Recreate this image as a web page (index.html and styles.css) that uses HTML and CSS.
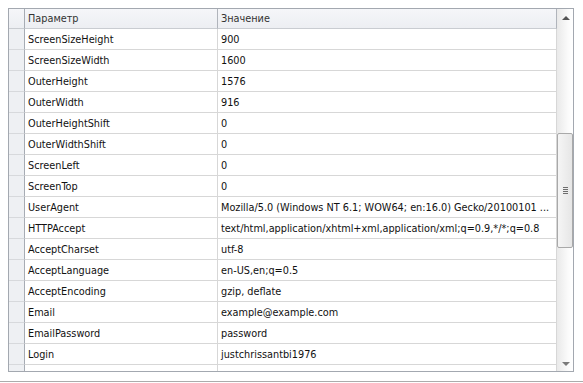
FILE: index.html
```html
<!DOCTYPE html>
<html>
<head>
<meta charset="utf-8">
<link rel="stylesheet" href="styles.css">
</head>
<body>
<div class="page">
  <div class="grid">
    <div class="table">
      <div class="row head">
        <div class="ind"></div>
        <div class="cell">Параметр</div>
        <div class="cell">Значение</div>
      </div>
      <div class="row"><div class="ind"></div><div class="cell">ScreenSizeHeight</div><div class="cell">900</div></div>
      <div class="row"><div class="ind"></div><div class="cell">ScreenSizeWidth</div><div class="cell">1600</div></div>
      <div class="row"><div class="ind"></div><div class="cell">OuterHeight</div><div class="cell">1576</div></div>
      <div class="row"><div class="ind"></div><div class="cell">OuterWidth</div><div class="cell">916</div></div>
      <div class="row"><div class="ind"></div><div class="cell">OuterHeightShift</div><div class="cell">0</div></div>
      <div class="row"><div class="ind"></div><div class="cell">OuterWidthShift</div><div class="cell">0</div></div>
      <div class="row"><div class="ind"></div><div class="cell">ScreenLeft</div><div class="cell">0</div></div>
      <div class="row"><div class="ind"></div><div class="cell">ScreenTop</div><div class="cell">0</div></div>
      <div class="row"><div class="ind"></div><div class="cell">UserAgent</div><div class="cell">Mozilla/5.0 (Windows NT 6.1; WOW64; en:16.0) Gecko/20100101 ...</div></div>
      <div class="row"><div class="ind"></div><div class="cell">HTTPAccept</div><div class="cell">text/html,application/xhtml+xml,application/xml;q=0.9,*/*;q=0.8</div></div>
      <div class="row"><div class="ind"></div><div class="cell">AcceptCharset</div><div class="cell">utf-8</div></div>
      <div class="row"><div class="ind"></div><div class="cell">AcceptLanguage</div><div class="cell">en-US,en;q=0.5</div></div>
      <div class="row"><div class="ind"></div><div class="cell">AcceptEncoding</div><div class="cell">gzip, deflate</div></div>
      <div class="row"><div class="ind"></div><div class="cell">Email</div><div class="cell">example@example.com</div></div>
      <div class="row"><div class="ind"></div><div class="cell">EmailPassword</div><div class="cell">password</div></div>
      <div class="row"><div class="ind"></div><div class="cell">Login</div><div class="cell">justchrissantbi1976</div></div>
      <div class="row"><div class="ind"></div><div class="cell">Password</div><div class="cell">qwerty</div></div>
    </div>
    <div class="scroll">
      <div class="btn"><span class="up"></span></div>
      <div class="track">
        <div class="thumb"><span class="grip"></span></div>
      </div>
      <div class="btn"><span class="down"></span></div>
    </div>
  </div>
</div>
</body>
</html>
```

FILE: styles.css
```css
html, body {
  margin: 0;
  padding: 0;
  background: #ffffff;
}
.page {
  width: 583px;
  height: 382px;
  border-bottom: 1px solid #acacac;
  padding: 8px 0 0 8px;
  box-sizing: border-box;
  overflow: hidden;
  font-family: "DejaVu Sans Condensed", "Liberation Sans", sans-serif;
  font-size: 10.8px;
  color: #111111;
}
.grid {
  width: 566px;
  height: 364px;
  box-sizing: border-box;
  border: 1px solid #a3a8b0;
  display: flex;
  overflow: hidden;
}
.table {
  width: 548px;
  display: flex;
  flex-direction: column;
  overflow: hidden;
}
.row {
  display: grid;
  grid-template-columns: 16px 193px 339px;
  height: 21px;
  flex: none;
}
.row.head {
  height: 20px;
  background: linear-gradient(#f5f6f9, #eceef2);
}
.ind {
  background: #eef0f3;
  border-right: 1px solid #a7acb4;
  border-bottom: 1px solid #d7d9dc;
}
.head .ind {
  background: transparent;
  border-bottom-color: #c9ccd1;
}
.cell {
  border-right: 1px solid #d7d7d7;
  border-bottom: 1px solid #d7d7d7;
  padding-left: 3px;
  padding-top: 1px;
  line-height: 19px;
  white-space: nowrap;
  overflow: hidden;
}
.head .cell {
  padding-top: 1px;
  line-height: 18px;
  color: #333333;
  border-right-color: #b0b4bb;
  border-bottom-color: #c9ccd1;
}
.scroll {
  width: 16px;
  display: flex;
  flex-direction: column;
  background: linear-gradient(to right, #e9e9e9, #fbfbfb 70%, #ffffff);
}
.btn {
  height: 17px;
  flex: none;
  display: flex;
  align-items: center;
  justify-content: center;
}
.up {
  width: 0;
  height: 0;
  border-left: 4px solid transparent;
  border-right: 4px solid transparent;
  border-bottom: 4px solid #555555;
  margin-left: 1px;
}
.down {
  width: 0;
  height: 0;
  border-left: 4px solid transparent;
  border-right: 4px solid transparent;
  border-top: 4px solid #7a7a7a;
  margin-left: 1px;
  margin-top: 3px;
}
.track {
  flex: 1;
}
.thumb {
  margin-top: 107px;
  width: 16px;
  height: 115px;
  box-sizing: border-box;
  border: 1px solid #a9a9a9;
  border-radius: 2px;
  background: linear-gradient(to right, #f5f5f5, #e6e6e6);
  display: flex;
  align-items: center;
  justify-content: center;
}
.grip {
  width: 5px;
  height: 7px;
  background: repeating-linear-gradient(#6e6e6e 0 1px, transparent 1px 2px);
}
```
